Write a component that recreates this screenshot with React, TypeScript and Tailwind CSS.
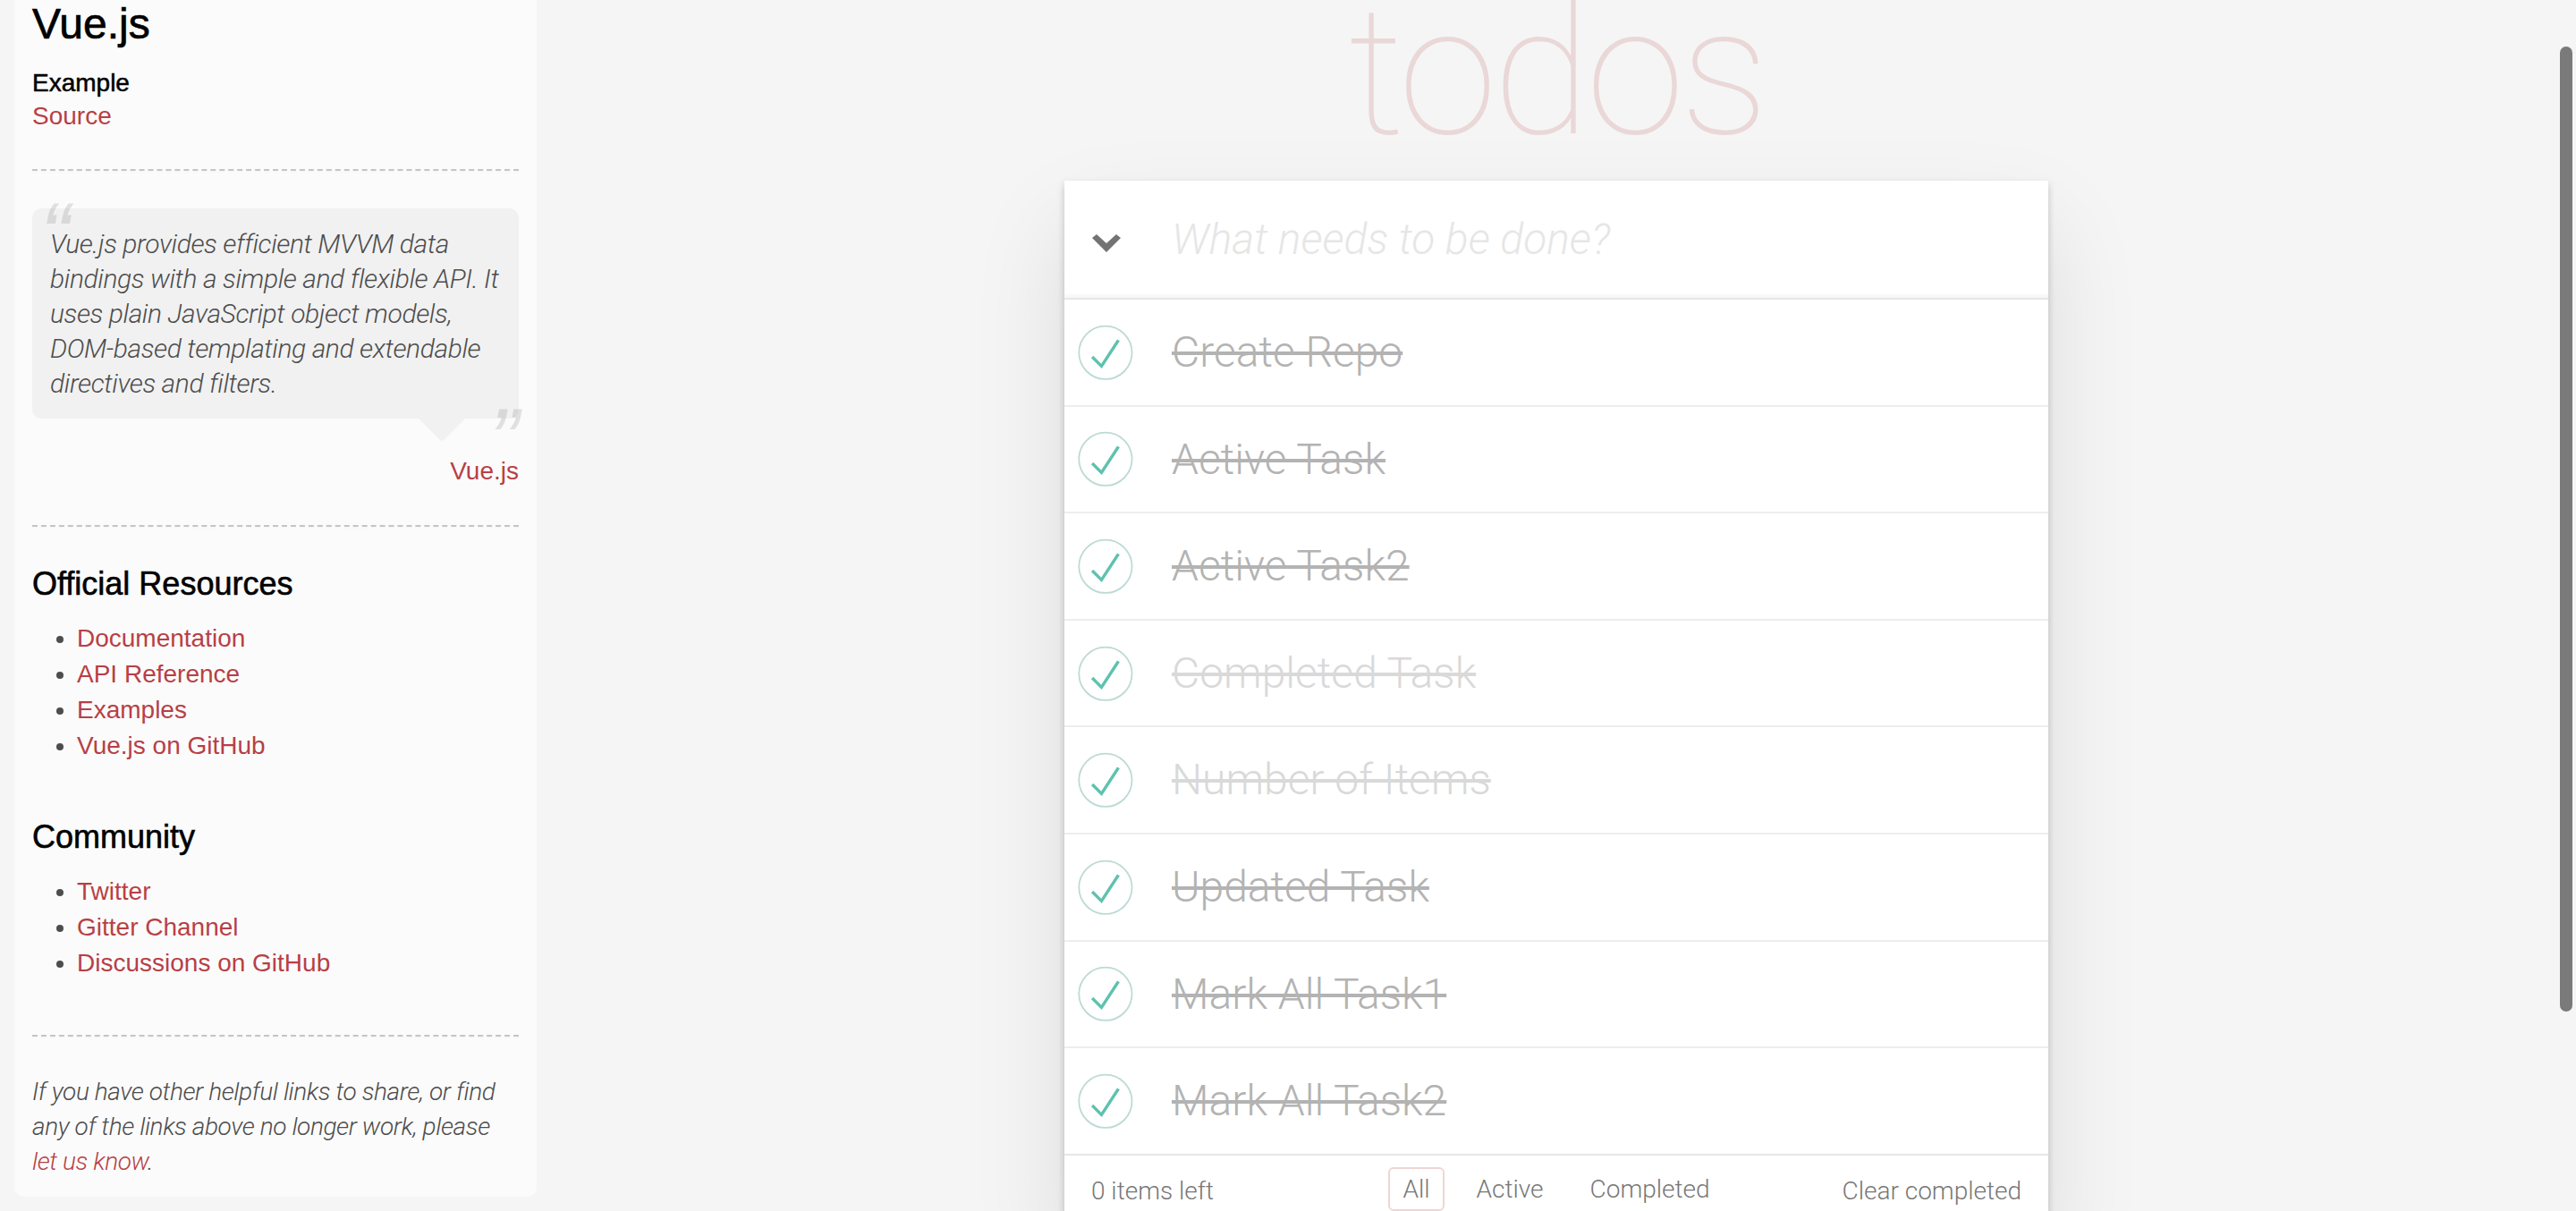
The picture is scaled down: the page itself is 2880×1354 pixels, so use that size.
import React from 'react';

type Todo = { id: number; title: string; faded: boolean };

const TODOS: Todo[] = [
  { id: 1, title: 'Create Repo', faded: false },
  { id: 2, title: 'Active Task', faded: false },
  { id: 3, title: 'Active Task2', faded: false },
  { id: 4, title: 'Completed Task', faded: true },
  { id: 5, title: 'Number of Items', faded: true },
  { id: 6, title: 'Updated Task', faded: false },
  { id: 7, title: 'Mark All Task1', faded: false },
  { id: 8, title: 'Mark All Task2', faded: false },
];

const OFFICIAL = ['Documentation', 'API Reference', 'Examples', 'Vue.js on GitHub'];
const COMMUNITY = ['Twitter', 'Gitter Channel', 'Discussions on GitHub'];

function CheckedToggle() {
  return (
    <svg width="80" height="80" viewBox="-10 -18 100 135" className="shrink-0">
      <circle cx="50" cy="50" r="50" fill="none" stroke="#bddad5" strokeWidth="3" />
      <path fill="#5dc2af" d="M72 25L42 71 27 56l-4 4 20 20 34-52z" />
    </svg>
  );
}

function Dashed({ className = '' }: { className?: string }) {
  return <hr className={`border-0 border-t-2 border-b-2 border-dashed border-t-[#c5c5c5] border-b-[#f7f7f7] ${className}`} />;
}

function LinkList({ items, className = '' }: { items: string[]; className?: string }) {
  return (
    <ul className={`ml-[50px] list-disc text-[28px] leading-[40px] marker:text-[#4d4d4d] ${className}`}>
      {items.map((it) => (
        <li key={it}>
          <a className="text-[#b83f45]">{it}</a>
        </li>
      ))}
    </ul>
  );
}

function Sidebar() {
  return (
    <aside className="ml-4 -mt-[42px] w-[584px] shrink-0 rounded-[10px] bg-white/60 p-5">
      <header>
        <h3 className="mt-5 text-[48px] leading-[58px] text-black [-webkit-text-stroke:0.7px_black]">Vue.js</h3>
        <h5 className="mt-5 text-[28px] leading-[34px] text-black [-webkit-text-stroke:0.5px_black]">Example</h5>
        <a className="block text-[28px] leading-[39px] text-[#b83f45]">Source</a>
      </header>
      <Dashed className="mt-10" />

      <div className="relative mt-10 rounded-[10px] bg-[rgba(0,0,0,0.04)] p-5">
        <span className="absolute left-[9px] top-[-21px] font-['Liberation_Sans',Arial,sans-serif] text-[100px] italic leading-[100px] text-[rgba(77,77,77,0.15)]">
          “
        </span>
        <p className="whitespace-nowrap font-['Roboto',sans-serif] text-[30px] font-light italic leading-[39px] tracking-[-0.4px] text-[#4d4d4d]">
          Vue.js provides efficient MVVM data
          <br />
          bindings with a simple and flexible API. It
          <br />
          uses plain JavaScript object models,
          <br />
          DOM-based templating and extendable
          <br />
          directives and filters.
        </p>
        <span className="absolute right-[0px] top-[208px] font-['Liberation_Sans',Arial,sans-serif] text-[100px] italic leading-[100px] text-[rgba(77,77,77,0.15)]">
          ”
        </span>
        <span className="absolute right-[60px] top-full border-[26px] border-transparent border-t-[rgba(0,0,0,0.04)]" />
      </div>
      <div className="mt-[39px] text-right text-[28px] leading-[39px]">
        <a className="text-[#b83f45]">Vue.js</a>
      </div>

      <Dashed className="mt-[41px]" />

      <h4 className="mt-10 text-[36px] leading-[43px] text-black [-webkit-text-stroke:0.6px_black]">Official Resources</h4>
      <LinkList items={OFFICIAL} className="mt-5" />

      <h4 className="mt-[60px] text-[36px] leading-[43px] text-black [-webkit-text-stroke:0.6px_black]">Community</h4>
      <LinkList items={COMMUNITY} className="mt-5" />

      <Dashed className="mt-[60px]" />
      <p className="mt-10 whitespace-nowrap font-['Roboto',sans-serif] text-[28px] font-light italic leading-[39px] tracking-[-0.4px] text-[#4d4d4d]">
        If you have other helpful links to share, or find
        <br />
        any of the links above no longer work, please
        <br />
        <a className="text-[#b83f45]">let us know</a>.
      </p>
    </aside>
  );
}

function TodoApp() {
  return (
    <main className="ml-[590px] w-[1100px] shrink-0 font-['Roboto','Liberation_Sans',sans-serif] font-light">
      <h1 className="-mt-[19px] h-[200px] text-center text-[200px] font-thin leading-[200px] tracking-[-5px] text-[rgba(175,47,47,0.15)]">
        todos
      </h1>
      <section className="relative mt-[21px] bg-white shadow-[0_4px_8px_0_rgba(0,0,0,0.2),0_50px_100px_0_rgba(0,0,0,0.1)]">
        <header className="relative">
          <input
            className="box-border block h-[131px] w-full bg-transparent pl-[120px] pr-8 text-[48px] font-light text-[#4d4d4d] shadow-[inset_0_-4px_2px_rgba(0,0,0,0.03)] outline-none placeholder:italic placeholder:font-light placeholder:text-[#e6e6e6]"
            placeholder="What needs to be done?"
          />
          <svg width="32" height="20" viewBox="0 0 32 20" className="absolute left-[31px] top-[60px]">
            <polygon points="0,4 5,0 16,10 27,0 32,4 16,20" fill="#737373" />
          </svg>
        </header>
        <ul className="border-t-2 border-[#e6e6e6]">
          {TODOS.map((t, i) => (
            <li
              key={t.id}
              className={`flex items-center ${i < TODOS.length - 1 ? 'border-b-2 border-[#ededed]' : ''}`}
            >
              <CheckedToggle />
              <label
                className={`block py-[30px] pl-[40px] text-[48px] leading-[57.6px] line-through decoration-[4px] ${
                  t.faded ? 'text-[#d9d9d9]' : 'text-[#b3b3b3]'
                }`}
              >
                {t.title}
              </label>
            </li>
          ))}
        </ul>
        <footer className="grid h-[84px] grid-cols-[1fr_auto_1fr] border-t-2 border-[#e6e6e6] px-[30px] py-5 text-[28px] leading-[40px] text-[#777]">
          <span className="justify-self-start">
            <strong className="font-light">0</strong> items left
          </span>
          <ul className="-mt-[7px] flex items-start gap-[8px]">
            <li>
              <a className="mx-[6px] block rounded-[6px] border-2 border-[rgba(175,47,47,0.2)] px-[14px] py-[6px] leading-[33px]">All</a>
            </li>
            <li>
              <a className="mx-[6px] block rounded-[6px] border-2 border-transparent px-[14px] py-[6px] leading-[33px]">Active</a>
            </li>
            <li>
              <a className="mx-[6px] block rounded-[6px] border-2 border-transparent px-[14px] py-[6px] leading-[33px]">Completed</a>
            </li>
          </ul>
          <span className="justify-self-end">Clear completed</span>
        </footer>
      </section>
    </main>
  );
}

export default function App() {
  return (
    <div className="relative h-[1354px] overflow-hidden bg-[#f5f5f5] font-['Liberation_Sans',Arial,sans-serif] text-[28px] text-[#4d4d4d]">
      <div className="flex items-start">
        <Sidebar />
        <TodoApp />
      </div>
      <div className="absolute left-[2862px] top-[52px] h-[1079px] w-[14px] rounded-full bg-[#7a7a7a]" />
    </div>
  );
}
